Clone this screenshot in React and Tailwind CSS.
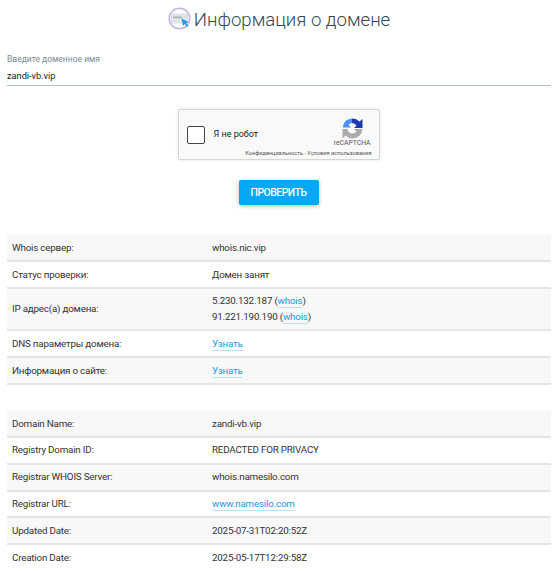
const ipRows = [
  { ip: "5.230.132.187" },
  { ip: "91.221.190.190" },
];

const Link = ({ children }) => (
  <a href="#" className="text-[#1a9be6] border-b border-[#b5e3fb] pb-px">{children}</a>
);

const Row = ({ label, shaded, children }) => (
  <div className={`flex items-center py-[4.7px] border-b-2 border-[#e4e4e4] last:border-b-0 ${shaded ? "bg-[#f8f8f8]" : ""}`}>
    <div className="w-[205px] pl-[5px] shrink-0">{label}</div>
    <div>{children}</div>
  </div>
);

const Logo = () => (
  <svg width="23" height="23" viewBox="0 0 23 23" className="shrink-0 -mt-[5px]">
    <circle cx="11.5" cy="11.5" r="10.2" fill="#fff" stroke="#c3b2e4" strokeWidth="1.6" />
    <rect x="3" y="6.5" width="17" height="10" rx="1.5" fill="#dfe3e6" />
    <rect x="5" y="9.5" width="9" height="1.6" fill="#a9b1b8" />
    <path d="M13.5 11.5 L20.5 15 L18 16 L20.5 19 L19 20 L16.8 17 L15 19 Z" fill="#1c9ae8" />
  </svg>
);

const RecaptchaIcon = () => (
  <svg width="21" height="21" viewBox="0 0 21 21">
    {/* top left, light blue */}
    <path d="M1 8 A10 10 0 0 1 10 0.5 L12 5 A5.5 5.5 0 0 0 6.5 7 L9 9.5 L1 9.5 Z" fill="#4a90f5" />
    {/* top right, dark blue */}
    <path d="M10 0.5 A10 10 0 0 1 17.5 3.5 L20.5 1 L20.5 10 L12 10 L14.5 7.5 A5.5 5.5 0 0 0 10 5 Z" fill="#1c3aa9" />
    {/* bottom, gray */}
    <path d="M0.5 11 L5.5 11 A5.2 5.2 0 0 0 10.5 15.5 A5.2 5.2 0 0 0 14.5 13.5 L12 11 L20.5 11 A10 10 0 0 1 10.5 20.5 A10 10 0 0 1 3.5 17.5 L0.5 20.5 Z" fill="#ababab" />
  </svg>
);

const Captcha = () => (
  <div className="relative w-[202px] h-[51px] bg-[#f9f9f9] border border-[#d6d6d6] rounded-[2px] shadow-[0_0_3px_rgba(0,0,0,0.12)] flex items-center tracking-normal">
    <div className="w-[18px] h-[18px] ml-[8px] bg-white border border-[#444] rounded-[2px]" />
    <span className="ml-[9px] text-[9px] text-[#222]">Я не робот</span>
    <div className="ml-auto mr-[8px] flex flex-col items-center -mt-[4px]">
      <RecaptchaIcon />
      <span className="text-[6.8px] leading-[9px] text-[#555]">reCAPTCHA</span>
    </div>
    <span className="absolute right-[7px] bottom-[3px] text-[5.6px] leading-[6px] text-[#555] whitespace-nowrap">Конфиденциальность - Условия использования</span>
  </div>
);

export default function App() {
  return (
    <div className="h-[571px] overflow-hidden bg-white text-[#333] text-[9.8px] tracking-[-0.2px] leading-[15.5px] font-['Roboto',sans-serif]">
      <h1 className="h-[41px] flex items-center justify-center gap-[3px] text-[18.6px] tracking-normal font-light text-[#37474f] pr-[1px]">
        <Logo />
        <span>Информация о домене</span>
      </h1>

      <div className="ml-[7px] mr-[8px]">
        <div className="pt-[12px]">
          <div className="text-[8.5px] tracking-normal leading-[12px] text-[#7b8a94]">Введите доменное имя</div>
          <div className="pt-[3px] pb-[2px] text-[9.2px] tracking-normal leading-[15px] text-[#222] border-b border-[#b0bec5]">zandi-vb.vip</div>
        </div>

        <div className="flex justify-center pt-[23px] pr-[1px]">
          <Captcha />
        </div>

        <div className="flex justify-center pt-[20px] pr-[1px]">
          <button className="w-[80px] h-[25px] bg-[#03a9f4] text-white text-[10.4px] tracking-[-0.5px] font-medium rounded-[2px] shadow-[0_1px_4px_rgba(0,0,0,0.3)]">ПРОВЕРИТЬ</button>
        </div>

        <div className="pt-[30px]">
          <Row label="Whois сервер:" shaded>whois.nic.vip</Row>
          <Row label="Статус проверки:">Домен занят</Row>
          <Row label="IP адрес(а) домена:" shaded>
            {ipRows.map((r) => (
              <div key={r.ip}>{r.ip} (<Link>whois</Link>)</div>
            ))}
          </Row>
          <Row label="DNS параметры домена:"><Link>Узнать</Link></Row>
          <div className="flex items-center py-[4.7px] border-b-2 border-[#e4e4e4] bg-[#f8f8f8]">
            <div className="w-[205px] pl-[5px] shrink-0">Информация о сайте:</div>
            <div><Link>Узнать</Link></div>
          </div>
        </div>

        <div className="pt-[26px]">
          <Row label="Domain Name:" shaded>zandi-vb.vip</Row>
          <Row label="Registry Domain ID:">REDACTED FOR PRIVACY</Row>
          <Row label="Registrar WHOIS Server:" shaded>whois.namesilo.com</Row>
          <Row label="Registrar URL:"><Link>www.namesilo.com</Link></Row>
          <Row label="Updated Date:" shaded>2025-07-31T02:20:52Z</Row>
          <Row label="Creation Date:">2025-05-17T12:29:58Z</Row>
        </div>
      </div>
    </div>
  );
}
